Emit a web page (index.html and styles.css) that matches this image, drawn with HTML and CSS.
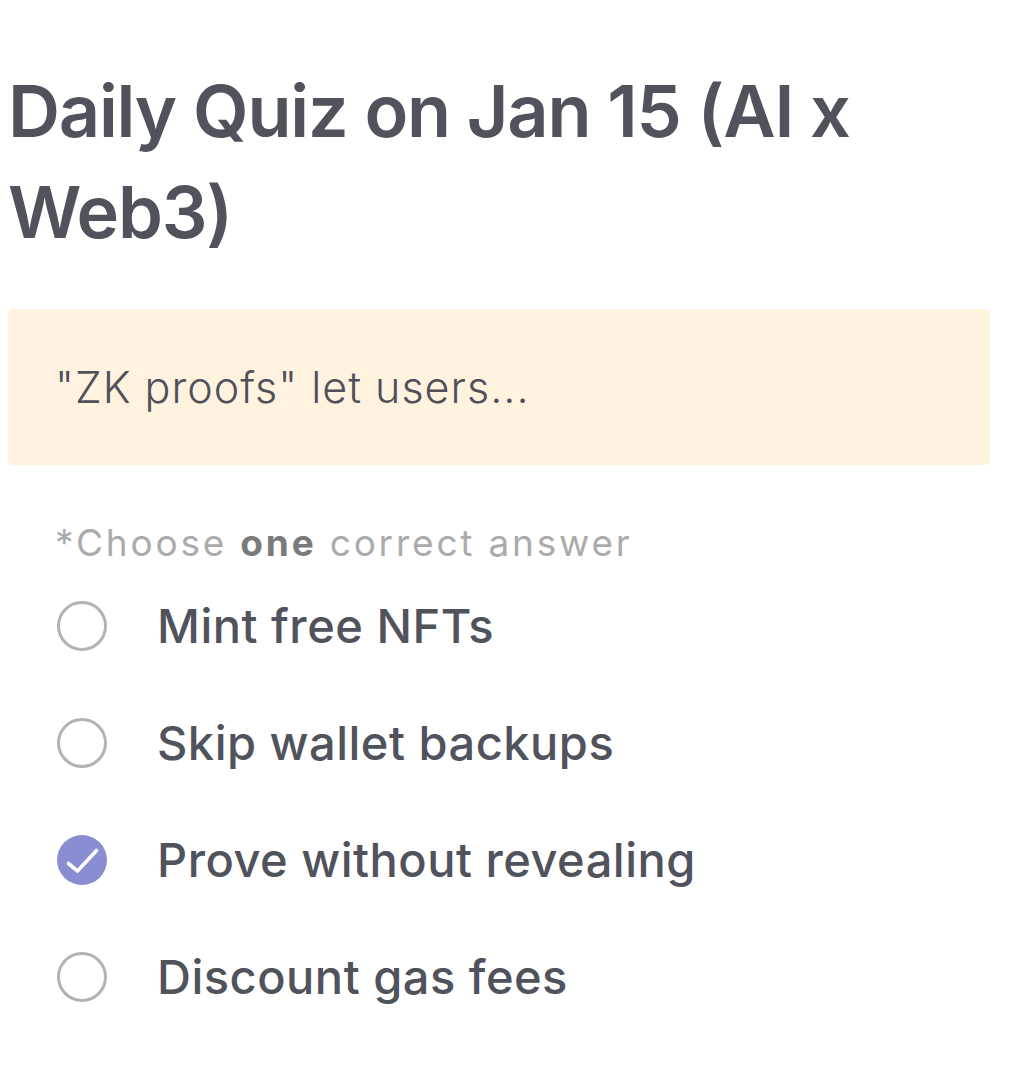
FILE: index.html
```html
<!DOCTYPE html>
<html lang="en">
<head>
<meta charset="utf-8">
<title>Daily Quiz</title>
<link rel="stylesheet" href="styles.css">
</head>
<body>
<main class="quiz">
  <h1 class="quiz-title">Daily Quiz on Jan 15 (AI x Web3)</h1>
  <div class="question">"ZK proofs" let users...</div>
  <p class="hint">*Choose <strong>one</strong> correct answer</p>
  <ul class="options">
    <li class="option"><span class="radio"></span><span class="label">Mint free NFTs</span></li>
    <li class="option"><span class="radio"></span><span class="label">Skip wallet backups</span></li>
    <li class="option"><span class="radio checked"><svg class="check" viewBox="0 0 50 50" width="50" height="50"><path d="M11.5 28.5L20.5 36L39.5 15.5" fill="none" stroke="#fff" stroke-width="3.6" stroke-linecap="round" stroke-linejoin="round"/></svg></span><span class="label">Prove without revealing</span></li>
    <li class="option"><span class="radio"></span><span class="label">Discount gas fees</span></li>
  </ul>
</main>
</body>
</html>
```

FILE: styles.css
```css
html, body {
  margin: 0;
  padding: 0;
  background: #ffffff;
}
body {
  font-family: "Inter", "Noto Sans", sans-serif;
  color: #50525c;
}
.quiz {
  width: 982px;
  margin-left: 8px;
  padding-top: 60px;
}
.quiz-title {
  margin: 0;
  font-size: 72px;
  line-height: 101px;
  font-weight: 600;
  letter-spacing: -1.2px;
  color: #50525c;
}
.question {
  margin-top: 47px;
  background: #fff3e0;
  border-radius: 5px;
  padding: 52px 47px;
  font-size: 43px;
  line-height: 52px;
  font-weight: 300;
  letter-spacing: 1px;
  color: #505059;
}
.hint {
  margin: 56px 0 2px 47px;
  font-size: 37px;
  line-height: 44px;
  letter-spacing: 2.8px;
  color: #ababab;
}
.hint strong {
  font-weight: 700;
  color: #7a7a7a;
}
.options {
  list-style: none;
  margin: 0;
  padding: 0 0 0 49px;
}
.option {
  height: 117px;
  display: flex;
  align-items: center;
  gap: 50px;
}
.radio {
  box-sizing: border-box;
  width: 50px;
  height: 50px;
  border-radius: 50%;
  border: 3px solid #b3b3b3;
  flex: none;
  display: flex;
  align-items: center;
  justify-content: center;
}
.radio.checked {
  border: none;
  background: #8a8dd1;
}
.check {
  display: block;
}
.label {
  font-size: 47px;
  line-height: 56px;
  font-weight: 500;
  letter-spacing: 0.5px;
  color: #50525c;
}
```
